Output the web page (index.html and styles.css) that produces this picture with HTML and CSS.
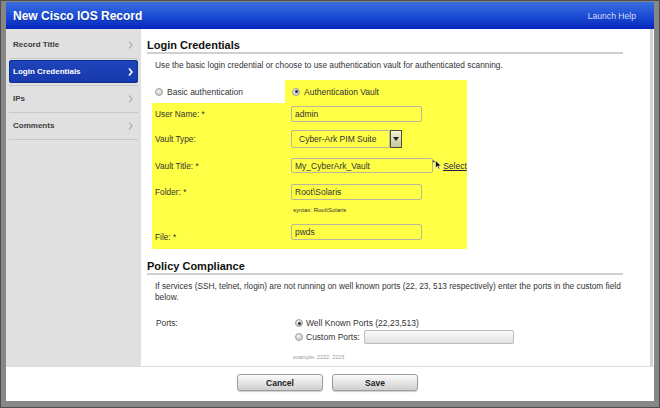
FILE: index.html
```html
<!DOCTYPE html>
<html>
<head>
<meta charset="utf-8">
<link rel="stylesheet" href="styles.css">
</head>
<body>
<div class="dialog">
  <div class="header">
    <span class="title">New Cisco IOS Record</span>
    <span class="help">Launch Help</span>
  </div>
  <div class="main">
    <ul class="sidebar">
      <li class="nav-item"><a class="nav-link">Record Title<svg class="chev" width="5" height="8" viewBox="0 0 5 8"><polyline points="1,0.5 4,4 1,7.5" fill="none" stroke="#a4a4a4" stroke-width="1.1"/></svg></a></li>
      <li class="nav-item"><a class="nav-link active">Login Credentials<svg class="chev" width="5" height="8" viewBox="0 0 5 8"><polyline points="1,0.5 4,4 1,7.5" fill="none" stroke="#ffffff" stroke-width="1.6"/></svg></a></li>
      <li class="nav-item"><a class="nav-link">IPs<svg class="chev" width="5" height="8" viewBox="0 0 5 8"><polyline points="1,0.5 4,4 1,7.5" fill="none" stroke="#a4a4a4" stroke-width="1.1"/></svg></a></li>
      <li class="nav-item"><a class="nav-link">Comments<svg class="chev" width="5" height="8" viewBox="0 0 5 8"><polyline points="1,0.5 4,4 1,7.5" fill="none" stroke="#a4a4a4" stroke-width="1.1"/></svg></a></li>
    </ul>
    <div class="content">
      <h2 class="section-title">Login Credentials</h2>
      <p class="desc">Use the basic login credential or choose to use authentication vault for authenticated scanning.</p>
      <div class="vault">
        <div class="auth-row">
          <label class="opt opt-basic"><span class="radio"></span>Basic authentication</label>
          <label class="opt opt-vault"><span class="radio checked"></span>Authentication Vault</label>
        </div>
        <div class="fields">
          <div class="row r1">
            <span class="label">User Name: *</span>
            <span class="input">admin</span>
          </div>
          <div class="row r2">
            <span class="label">Vault Type:</span>
            <span class="select">
              <span class="select-box">Cyber-Ark PIM Suite</span>
              <span class="select-btn"><svg width="6" height="4" viewBox="0 0 6 4"><polygon points="0,0 6,0 3,4" fill="#222"/></svg></span>
            </span>
          </div>
          <div class="row r3">
            <span class="label">Vault Title: *</span>
            <span class="input wide">My_CyberArk_Vault</span>
            <span class="star">*</span>
            <svg class="pointer" width="7" height="10" viewBox="0 0 7 10"><polygon points="0.5,0.5 0.5,8 2.4,6.3 3.8,9.3 5,8.8 3.6,5.9 6.2,5.9" fill="#111" stroke="#fff" stroke-width="0.6"/></svg>
            <a class="link">Select</a>
          </div>
          <div class="row r4">
            <span class="label lh16">Folder: *</span>
            <div class="stack">
              <span class="input">Root\Solaris</span>
              <span class="hint">syntax: Root\Solaris</span>
            </div>
          </div>
          <div class="row r5">
            <span class="label low">File: *</span>
            <span class="input">pwds</span>
          </div>
        </div>
      </div>

      <h2 class="section-title policy">Policy Compliance</h2>
      <p class="desc">If services (SSH, telnet, rlogin) are not running on well known ports (22, 23, 513 respectively) enter the ports in the custom field<br>below.</p>
      <div class="ports">
        <span class="ports-label">Ports:</span>
        <div class="port-opts">
          <label class="port-opt"><span class="radio checked"></span>Well Known Ports (22,23,513)</label>
          <label class="port-opt"><span class="radio"></span>Custom Ports:<span class="custom-input"></span></label>
        </div>
      </div>
      <p class="example">example: 2222, 2223</p>
    </div>
  </div>
  <div class="footer">
    <button class="btn">Cancel</button>
    <button class="btn">Save</button>
  </div>
</div>
</body>
</html>
```

FILE: styles.css
```css
* { box-sizing: border-box; margin: 0; padding: 0; }
html, body { width: 660px; height: 408px; overflow: hidden; }
body {
  background: #878787;
  font-family: "Liberation Sans", Arial, sans-serif;
  padding: 2px 6px 7px;
  box-shadow: inset 0 0 0 1px #4e4e4e;
}
.dialog {
  height: 399px;
  background: #fff;
  display: flex;
  flex-direction: column;
}
.header {
  height: 27px;
  flex: none;
  display: flex;
  align-items: center;
  justify-content: space-between;
  padding: 0 18px 0 7px;
  background: linear-gradient(#3a6fe0, #1a4ad2 55%, #0426ba);
}
.title { color: #fff; font-weight: bold; font-size: 12px; text-shadow: 0 1px 0 rgba(0,0,0,0.25); }
.help { color: #d4dcf6; font-size: 8.6px; }

.main { display: flex; height: 337px; flex: none; }
.sidebar {
  width: 135px;
  flex: none;
  background: #e0e0e0;
  padding-top: 3px;
  list-style: none;
}
.nav-item {
  margin: 0 3px;
  height: 27px;
  padding: 1px 0 2px;
  border-bottom: 1px solid #c7c7c7;
}
.nav-link {
  display: flex;
  align-items: center;
  justify-content: space-between;
  height: 23px;
  padding: 0 5px 0 4px;
  font-size: 8px;
  font-weight: bold;
  color: #3c3c3c;
  border-radius: 3px;
}
.nav-link.active {
  background: linear-gradient(#1f45bc, #1638ab);
  color: #fff;
  box-shadow: inset 0 0 0 1px #12308f;
}
.chev { display: block; }

.content {
  flex: 1;
  padding: 10px 27px 0 6px;
  margin-right: 1px;
  border-right: 3px solid #d4d4d4;
  overflow: hidden;
}
.section-title {
  font-size: 11px;
  font-weight: bold;
  line-height: 13px;
  color: #111;
  border-bottom: 2px solid #d0d0d0;
}
.section-title.policy { margin-top: 11px; }
.desc {
  font-size: 8.3px;
  line-height: 11px;
  color: #333;
  margin: 5.5px 0 0 8px;
  white-space: nowrap;
}
.vault { margin: 9.5px 0 0 5px; width: 315px; }
.auth-row { display: flex; height: 23px; }
.opt { display: flex; align-items: center; gap: 4px; font-size: 8.5px; color: #333; }
.opt-basic { width: 133px; padding-left: 3px; }
.opt-vault { flex: 1; background: #ffff45; padding-left: 7px; }
.radio {
  width: 8px; height: 8px; flex: none;
  border-radius: 50%;
  border: 1px solid #a0a0a0;
  background: radial-gradient(circle at 40% 35%, #f2f2f2, #bdbdbd);
  display: flex; align-items: center; justify-content: center;
}
.radio.checked::after {
  content: "";
  width: 3px; height: 3px; border-radius: 50%;
  background: #2a2a2a;
}
.fields { background: #ffff45; padding: 3px 0 9px 3px; }
.row { display: flex; align-items: center; }
.r1 { margin-bottom: 8px; }
.r2 { margin-bottom: 10px; }
.r3 { margin-bottom: 11px; }
.r4 { margin-bottom: 9px; align-items: flex-start; }
.r5 { height: 16px; align-items: flex-start; }
.label { width: 136px; flex: none; font-size: 8.3px; color: #333; }
.label.lh16 { line-height: 16px; }
.label.low { line-height: 11px; margin-top: 7.5px; }
.input {
  width: 131px; height: 16px;
  border: 1px solid #b8b8a0;
  border-radius: 2px;
  font-size: 8.5px;
  padding-left: 3px;
  display: flex; align-items: center;
  color: #333;
}
.r3 .input { height: 15px; }
.input.wide { width: 142px; }
.select { display: flex; width: 111px; height: 18px; }
.select-box {
  flex: 1;
  border: 1px solid #b8b8a0;
  border-radius: 2px;
  font-size: 8.5px;
  padding-left: 7px;
  display: flex; align-items: center;
  color: #333;
}
.select-btn {
  width: 12px;
  border: 1px solid #4e4e30;
  background: linear-gradient(#f2f2d4, #c6c69c);
  display: flex; align-items: center; justify-content: center;
}
.star { font-size: 8px; color: #333; margin: -6px 0 0 -1px; }
.pointer { display: block; margin: -2px 0 0 0; }
.link { font-size: 8.5px; color: #1c1c50; text-decoration: underline; margin-left: 1px; }
.stack { display: flex; flex-direction: column; }
.hint { font-size: 6px; line-height: 10px; color: #333; margin-top: 5px; padding-left: 2px; }

.ports { display: flex; margin: 13.5px 0 0 9px; }
.ports-label { width: 139px; flex: none; font-size: 8.3px; color: #333; line-height: 14px; }
.port-opts { display: flex; flex-direction: column; }
.port-opt { display: flex; align-items: center; gap: 3px; height: 14px; font-size: 8.5px; color: #333; }
.custom-input {
  width: 150px; height: 14px; margin-left: 1px;
  border: 1px solid #bdbdbd; border-radius: 2px;
  background: linear-gradient(#fafafa, #e2e2e2);
}
.example { font-size: 5.5px; line-height: 8px; color: #999; margin: 9px 0 0 146px; }

.footer {
  height: 35px;
  flex: none;
  border-top: 1px solid #dcdcdc;
  display: flex;
  justify-content: center;
  align-items: flex-start;
  gap: 9px;
  padding: 7px 5px 0 0;
}
.btn {
  width: 86px; height: 17px;
  font-family: "Liberation Sans", Arial, sans-serif;
  font-size: 8.5px; font-weight: bold; color: #222;
  border: 1px solid #9c9c9c; border-radius: 3px;
  background: linear-gradient(#fbfbfb, #cfcfcf);
  box-shadow: 0 1px 1px rgba(0,0,0,0.2);
}
```
